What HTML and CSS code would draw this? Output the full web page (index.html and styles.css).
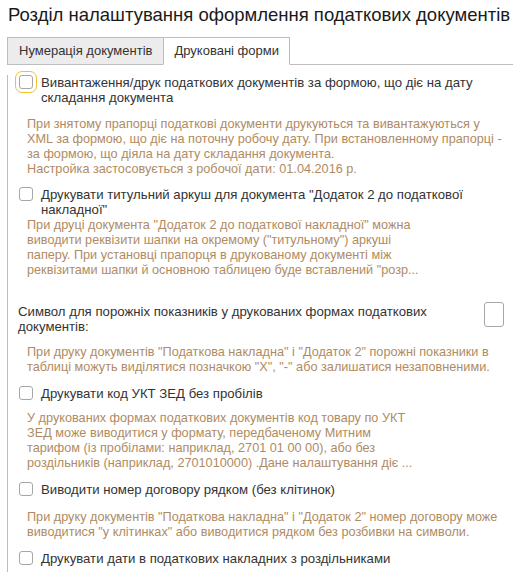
FILE: index.html
```html
<!DOCTYPE html>
<html lang="uk">
<head>
<meta charset="utf-8">
<title>Розділ налаштування оформлення податкових документів</title>
<link rel="stylesheet" href="styles.css">
</head>
<body>
<h1 class="title">Розділ налаштування оформлення податкових документів</h1>
<div class="tabs">
  <div class="tab">Нумерація документів</div>
  <div class="tab tab-active">Друковані форми</div>
  <div class="tab-fill"></div>
</div>
<div class="panel">
  <div class="check-row cb1">
    <span class="box focused"></span>
    <span class="label">Вивантаження/друк податкових документів за формою, що діє на дату<br>складання документа</span>
  </div>
  <p class="desc d1">При знятому прапорці податкові документи друкуються та вивантажуються у<br>XML за формою, що діє на поточну робочу дату. При встановленному прапорці -<br>за формою, що діяла на дату складання документа.<br>Настройка застосовується з робочої дати: 01.04.2016 р.</p>
  <div class="check-row cb2">
    <span class="box"></span>
    <span class="label">Друкувати титульний аркуш для документа "Додаток 2 до податкової<br>накладної"</span>
  </div>
  <p class="desc d2">При друці документа "Додаток 2 до податкової накладної" можна<br>виводити реквізити шапки на окремому ("титульному") аркуші<br>паперу. При установці прапорця в друкованому документі між<br>реквізитами шапки й основною таблицею буде вставлений "розр...</p>
  <div class="field-row">
    <span class="label field-label">Символ для порожніх показників у друкованих формах податкових<br>документів:</span>
    <span class="input"></span>
  </div>
  <p class="desc d3">При друку документів "Податкова накладна" і "Додаток 2" порожні показники в<br>таблиці можуть виділятися позначкою "X", "-" або залишатися незаповненими.</p>
  <div class="check-row cb4">
    <span class="box"></span>
    <span class="label">Друкувати код УКТ ЗЕД без пробілів</span>
  </div>
  <p class="desc d4">У друкованих формах податкових документів код товару по УКТ<br>ЗЕД може виводитися у формату, передбаченому Митним<br>тарифом (із пробілами: наприклад, 2701 01 00 00), або без<br>роздільників (наприклад, 2701010000) .Дане налаштування діє ...</p>
  <div class="check-row cb5">
    <span class="box"></span>
    <span class="label">Виводити номер договору рядком (без клітинок)</span>
  </div>
  <p class="desc d5">При друку документів "Податкова накладна" і "Додаток 2" номер договору може<br>виводитися "у клітинках" або виводитися рядком без розбивки на символи.</p>
  <div class="check-row cb6">
    <span class="box"></span>
    <span class="label">Друкувати дати в податкових накладних з роздільниками</span>
  </div>
</div>
</body>
</html>
```
FILE: styles.css
```css
html, body {
  margin: 0;
  padding: 0;
  background: #ffffff;
  overflow: hidden;
}
body {
  width: 513px;
  height: 572px;
  font-family: "Liberation Sans", Arial, sans-serif;
  font-size: 13px;
  color: #333333;
}
.title {
  margin: 0;
  padding: 3px 0 0 8px;
  height: 34px;
  box-sizing: border-box;
  font-size: 18.5px;
  font-weight: normal;
  line-height: 24px;
  color: #1a1a1a;
  white-space: nowrap;
}
.tabs {
  display: flex;
  align-items: flex-end;
  margin-top: 3px;
  padding-left: 7px;
  height: 28px;
}
.tab {
  box-sizing: border-box;
  height: 28px;
  line-height: 26px;
  padding: 0 11px;
  background: #ececec;
  border: 1px solid #bdbdbd;
  border-right: none;
  color: #333333;
  white-space: nowrap;
}
.tab-active {
  background: #ffffff;
  border-right: 1px solid #bdbdbd;
  border-bottom: 1px solid #ffffff;
  padding: 0 10px;
}
.tab-fill {
  flex: 1;
  border-bottom: 1px solid #bdbdbd;
}
.panel {
  border-left: 1px solid #bdbdbd;
  margin-left: 7px;
  padding-left: 11px;
  height: 520px;
}
.check-row {
  display: flex;
  align-items: flex-start;
  line-height: 15px;
}
.box {
  flex: none;
  box-sizing: border-box;
  width: 14px;
  height: 14px;
  margin-top: 0;
  margin-right: 8px;
  border: 1px solid #a6a6a6;
  border-radius: 3px;
  background: #ffffff;
}
.focused {
  outline: 1px solid #f2c12e;
  outline-offset: 3px;
}
.label {
  white-space: nowrap;
  color: #333333;
  font-size: 13.2px;
}
.desc {
  margin: 0 0 0 8px;
  line-height: 15px;
  font-size: 12.7px;
  color: #b08b62;
  white-space: nowrap;
}
.field-row {
  display: flex;
  justify-content: space-between;
  align-items: flex-start;
  line-height: 15px;
  padding-right: 9px;
}
.field-label {
  margin-left: -1px;
}
.input {
  box-sizing: border-box;
  width: 20px;
  height: 25px;
  margin-top: -2px;
  border: 1px solid #a6a6a6;
  border-radius: 3px;
  background: #ffffff;
}
.cb1 { margin-top: 10px; }
.d1 { margin-top: 12px; }
.cb2 { margin-top: 10px; }
.d2 { margin-top: 1px; }
.field-row { margin-top: 26px; }
.d3 { margin-top: 11px; }
.cb4 { margin-top: 11px; }
.d4 { margin-top: 10px; }
.cb5 { margin-top: 11px; }
.d5 { margin-top: 13px; }
.cb6 { margin-top: 11px; }
```
